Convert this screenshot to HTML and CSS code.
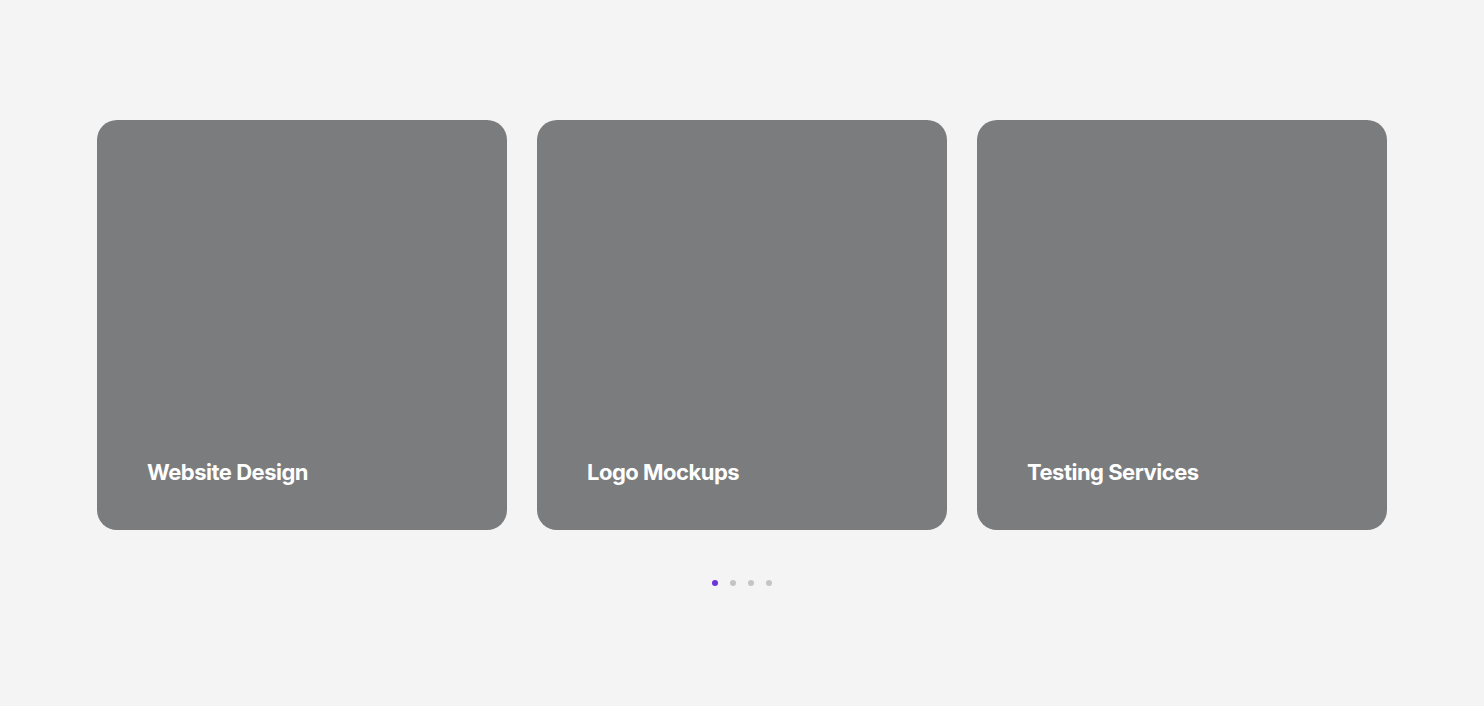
FILE: index.html
```html
<!DOCTYPE html>
<html>
<head>
<meta charset="utf-8">
<link rel="stylesheet" href="styles.css">
</head>
<body>
<section class="slider">
  <div class="track">
    <div class="card"><h3 class="title">Website Design</h3></div>
    <div class="card"><h3 class="title">Logo Mockups</h3></div>
    <div class="card"><h3 class="title">Testing Services</h3></div>
  </div>
  <div class="dots">
    <span class="dot active"></span>
    <span class="dot"></span>
    <span class="dot"></span>
    <span class="dot"></span>
  </div>
</section>
</body>
</html>
```

FILE: styles.css
```css
html, body {
  margin: 0;
  padding: 0;
  background: #f4f4f4;
  font-family: Inter, "Noto Sans", sans-serif;
}
.slider {
  padding-top: 120px;
  display: flex;
  flex-direction: column;
  align-items: center;
}
.track {
  display: flex;
  gap: 30px;
}
.card {
  width: 410px;
  height: 410px;
  background: #7b7c7e;
  border-radius: 20px;
  display: flex;
  align-items: flex-end;
  box-sizing: border-box;
  padding: 0 50px 44px;
}
.title {
  margin: 0;
  color: #fff;
  font-size: 22px;
  font-weight: 700;
  letter-spacing: -0.5px;
  line-height: 28px;
}
.dots {
  margin-top: 50px;
  display: flex;
  gap: 12px;
}
.dot {
  width: 6px;
  height: 6px;
  border-radius: 50%;
  background: #c4c4c4;
}
.dot.active {
  background: #6b35d9;
}
```
